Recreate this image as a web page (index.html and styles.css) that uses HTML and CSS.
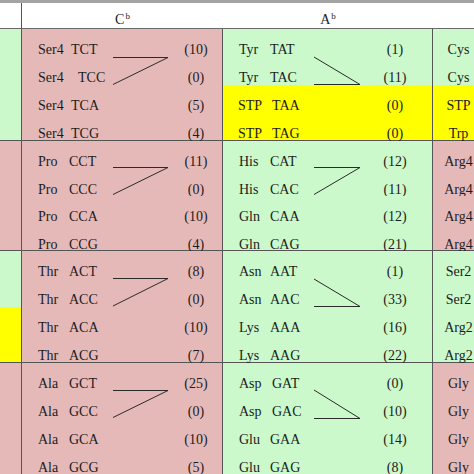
FILE: index.html
```html
<!DOCTYPE html>
<html>
<head>
<meta charset="utf-8">
<link rel="stylesheet" href="styles.css">
</head>
<body>
<div class="page">
  <div class="band"></div>
  <div class="table">
    <div class="hd hd-left"></div>
    <div class="hd hd-c"><span class="ht">C<sup class="sup">b</sup></span></div>
    <div class="hd hd-a"><span class="ht">A<sup class="sup">b</sup></span></div>
    <div class="hd hd-right"></div>

    <!-- block 1 -->
    <div class="cell lc"><div class="pair g"></div><div class="pair g"></div></div>
    <div class="cell cc">
      <div class="pair p">
        <div class="ln"><span>Ser4</span><span class="cod s1">TCT</span><span class="cnt">(10)</span></div>
        <div class="ln"><span>Ser4</span><span class="cod s2">TCC</span><span class="cnt">(0)</span></div>
      </div>
      <div class="pair p">
        <div class="ln"><span>Ser4</span><span class="cod s1">TCA</span><span class="cnt">(5)</span></div>
        <div class="ln"><span>Ser4</span><span class="cod s1">TCG</span><span class="cnt">(4)</span></div>
      </div>
      <svg class="ov" width="201" height="112"><polyline points="91,28.5 146,28.5 91,55.5"/></svg>
    </div>
    <div class="cell ac">
      <div class="pair g">
        <div class="ln"><span>Tyr</span><span class="cod">TAT</span><span class="cnt">(1)</span></div>
        <div class="ln"><span>Tyr</span><span class="cod">TAC</span><span class="cnt">(11)</span></div>
      </div>
      <div class="pair y">
        <div class="ln"><span class="stp">STP</span><span class="cod s1">TAA</span><span class="cnt">(0)</span></div>
        <div class="ln"><span class="stp">STP</span><span class="cod s1">TAG</span><span class="cnt">(0)</span></div>
      </div>
      <svg class="ov" width="210" height="112"><polyline points="91,28 137,55.5 91,55.5"/></svg>
    </div>
    <div class="cell rc">
      <div class="pair g"><div class="ln">Cys</div><div class="ln">Cys</div></div>
      <div class="pair y"><div class="ln">STP</div><div class="ln">Trp</div></div>
    </div>

    <!-- block 2 -->
    <div class="cell lc"><div class="pair p"></div><div class="pair p"></div></div>
    <div class="cell cc">
      <div class="pair p">
        <div class="ln"><span>Pro</span><span class="cod">CCT</span><span class="cnt">(11)</span></div>
        <div class="ln"><span>Pro</span><span class="cod">CCC</span><span class="cnt">(0)</span></div>
      </div>
      <div class="pair p">
        <div class="ln"><span>Pro</span><span class="cod">CCA</span><span class="cnt">(10)</span></div>
        <div class="ln"><span>Pro</span><span class="cod">CCG</span><span class="cnt">(4)</span></div>
      </div>
      <svg class="ov" width="201" height="110"><polyline points="91,26.5 146,26.5 91,53.5"/></svg>
    </div>
    <div class="cell ac">
      <div class="pair g">
        <div class="ln"><span>His</span><span class="cod">CAT</span><span class="cnt">(12)</span></div>
        <div class="ln"><span>His</span><span class="cod">CAC</span><span class="cnt">(11)</span></div>
      </div>
      <div class="pair g">
        <div class="ln"><span>Gln</span><span class="cod">CAA</span><span class="cnt">(12)</span></div>
        <div class="ln"><span>Gln</span><span class="cod">CAG</span><span class="cnt">(21)</span></div>
      </div>
      <svg class="ov" width="210" height="110"><polyline points="91,26.5 137,26.5 91,53.5"/></svg>
    </div>
    <div class="cell rc">
      <div class="pair p"><div class="ln">Arg4</div><div class="ln">Arg4</div></div>
      <div class="pair p"><div class="ln">Arg4</div><div class="ln">Arg4</div></div>
    </div>

    <!-- block 3 -->
    <div class="cell lc"><div class="pair g"></div><div class="pair y"></div></div>
    <div class="cell cc">
      <div class="pair p">
        <div class="ln"><span>Thr</span><span class="cod">ACT</span><span class="cnt">(8)</span></div>
        <div class="ln"><span>Thr</span><span class="cod">ACC</span><span class="cnt">(0)</span></div>
      </div>
      <div class="pair p">
        <div class="ln"><span>Thr</span><span class="cod">ACA</span><span class="cnt">(10)</span></div>
        <div class="ln"><span>Thr</span><span class="cod">ACG</span><span class="cnt">(7)</span></div>
      </div>
      <svg class="ov" width="201" height="112"><polyline points="91,27.5 146,27.5 91,55"/></svg>
    </div>
    <div class="cell ac">
      <div class="pair g">
        <div class="ln"><span>Asn</span><span class="cod">AAT</span><span class="cnt">(1)</span></div>
        <div class="ln"><span>Asn</span><span class="cod">AAC</span><span class="cnt">(33)</span></div>
      </div>
      <div class="pair g">
        <div class="ln"><span>Lys</span><span class="cod">AAA</span><span class="cnt">(16)</span></div>
        <div class="ln"><span>Lys</span><span class="cod">AAG</span><span class="cnt">(22)</span></div>
      </div>
      <svg class="ov" width="210" height="112"><polyline points="91,28 137,55.5 91,55.5"/></svg>
    </div>
    <div class="cell rc">
      <div class="pair g"><div class="ln">Ser2</div><div class="ln">Ser2</div></div>
      <div class="pair g"><div class="ln">Arg2</div><div class="ln">Arg2</div></div>
    </div>

    <!-- block 4 -->
    <div class="cell lc"><div class="pair p"></div><div class="pair p"></div></div>
    <div class="cell cc">
      <div class="pair p">
        <div class="ln"><span>Ala</span><span class="cod">GCT</span><span class="cnt">(25)</span></div>
        <div class="ln"><span>Ala</span><span class="cod">GCC</span><span class="cnt">(0)</span></div>
      </div>
      <div class="pair p">
        <div class="ln"><span>Ala</span><span class="cod">GCA</span><span class="cnt">(10)</span></div>
        <div class="ln"><span>Ala</span><span class="cod">GCG</span><span class="cnt">(5)</span></div>
      </div>
      <svg class="ov" width="201" height="112"><polyline points="91,27.5 146,27.5 91,54.5"/></svg>
    </div>
    <div class="cell ac">
      <div class="pair g">
        <div class="ln"><span>Asp</span><span class="cod s1">GAT</span><span class="cnt">(0)</span></div>
        <div class="ln"><span>Asp</span><span class="cod s1">GAC</span><span class="cnt">(10)</span></div>
      </div>
      <div class="pair g">
        <div class="ln"><span>Glu</span><span class="cod">GAA</span><span class="cnt">(14)</span></div>
        <div class="ln"><span>Glu</span><span class="cod">GAG</span><span class="cnt">(8)</span></div>
      </div>
      <svg class="ov" width="210" height="112"><polyline points="91,27 137,55.5 91,55.5"/></svg>
    </div>
    <div class="cell rc">
      <div class="pair p"><div class="ln">Gly</div><div class="ln">Gly</div></div>
      <div class="pair p"><div class="ln">Gly</div><div class="ln">Gly</div></div>
    </div>
  </div>
</div>
</body>
</html>
```
FILE: styles.css
```css
html, body {
  margin: 0;
  padding: 0;
  background: #ffffff;
  overflow: hidden;
}
.page {
  width: 484px;
  height: 474px;
  overflow: hidden;
  font-family: "Liberation Serif", "Times New Roman", serif;
  font-size: 14px;
  color: #1c1c1c;
}
.band {
  height: 3px;
  background: #a3a3a3;
}
.table {
  display: grid;
  grid-template-columns: 22px 201px 210px 51px;
  grid-template-rows: 26px 112px 110px 112px 112px;
}
.hd {
  box-sizing: border-box;
  border-bottom: 1px solid #6a6a6a;
  background: #ffffff;
  display: flex;
  align-items: flex-end;
  justify-content: center;
}
.ht {
  display: block;
  line-height: 14px;
  height: 14px;
  padding-bottom: 1px;
}
.hd-left {
  border-right: 1px solid #555555;
}
.sup {
  font-size: 9px;
  vertical-align: 5px;
  line-height: 0;
  margin-left: 1px;
}
.cell {
  box-sizing: border-box;
  border-bottom: 1px solid #555555;
  display: grid;
  grid-template-rows: minmax(0, 1fr) minmax(0, 1fr);
  position: relative;
}
.lc, .cc, .ac {
  border-right: 1px solid #555555;
}
.pair {
  min-height: 0;
  padding-top: 7px;
  box-sizing: border-box;
}
.g { background: #cbf9cb; }
.p { background: #e6b9b9; }
.y { background: #ffff00; }
.ln {
  height: 28px;
  line-height: 28px;
  white-space: nowrap;
}
.cc .ln, .ac .ln {
  display: grid;
  grid-template-columns: 31px 102px 50px;
  padding-left: 16px;
}
.ac .ln {
  grid-template-columns: 31px 100px 50px;
}
.cod.s1 { padding-left: 2px; }
.cod.s2 { padding-left: 9px; }
.stp { margin-left: -1px; }
.cnt { text-align: center; }
.rc .ln {
  text-align: center;
}
.ov {
  position: absolute;
  left: 0;
  top: 0;
  overflow: visible;
}
.ov polyline {
  fill: none;
  stroke: #2a2a2a;
  stroke-width: 1;
}
```
